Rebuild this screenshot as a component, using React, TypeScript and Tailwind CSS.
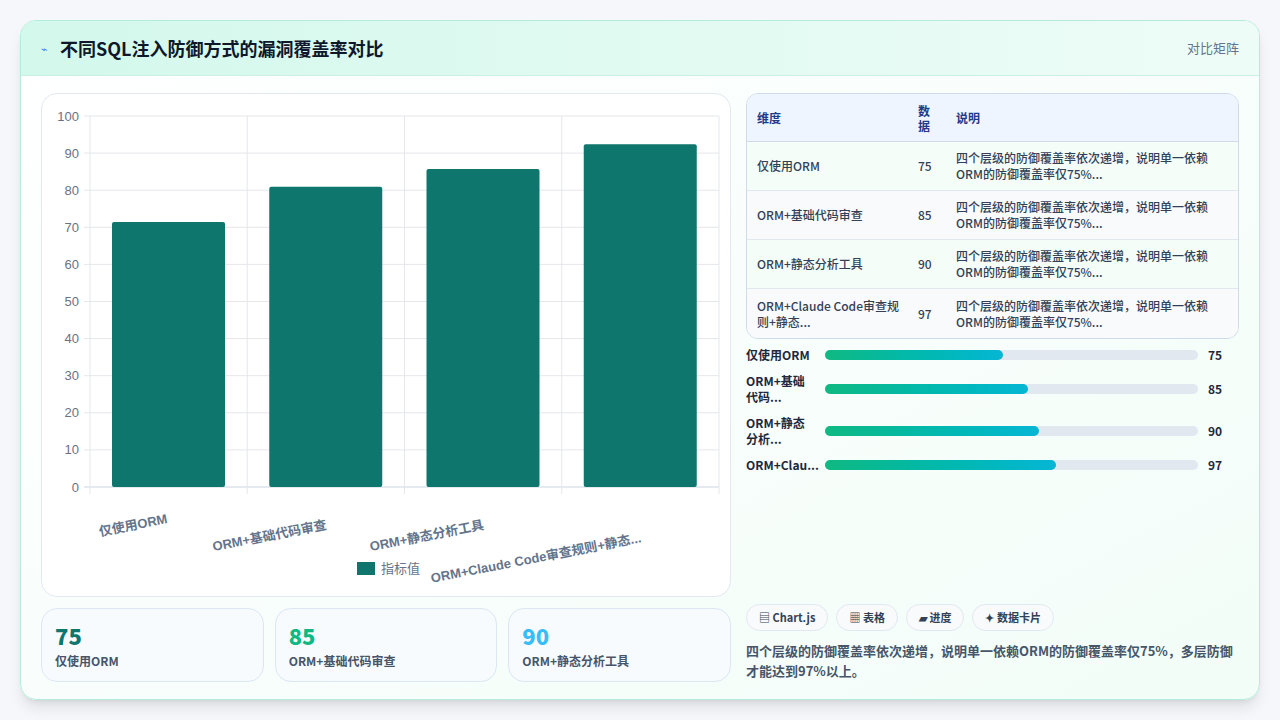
import React from 'react';

const items = [
  { name: '仅使用ORM', short: '仅使用ORM', v: 75, chart: 71.4, desc: '四个层级的防御覆盖率依次递增，说明单一依赖ORM的防御覆盖率仅75%...' },
  { name: 'ORM+基础代码审查', short: 'ORM+基础代码...', v: 85, chart: 80.9, desc: '' },
  { name: 'ORM+静态分析工具', short: 'ORM+静态分析...', v: 90, chart: 85.7, desc: '' },
  { name: 'ORM+Claude Code审查规则+静态...', short: 'ORM+Clau...', v: 97, chart: 92.4, desc: '' },
];

const font = { fontFamily: '"Noto Sans CJK SC", "Noto Sans", sans-serif' };

function BarChart() {
  // plot area in local coords (card starts at 40,93)
  const x0 = 48, x1 = 677, yb = 393, yt = 22;
  const h = yb - yt;
  const cw = (x1 - x0) / 4;
  const labels = ['仅使用ORM', 'ORM+基础代码审查', 'ORM+静态分析工具', 'ORM+Claude Code审查规则+静态...'];
  return (
    <svg width="689" height="503" className="block">
      {[0, 10, 20, 30, 40, 50, 60, 70, 80, 90, 100].map((t) => {
        const y = yb - (t / 100) * h;
        return (
          <g key={t}>
            <line x1={x0 - 6} x2={x1} y1={y} y2={y} stroke={t === 0 ? '#cbd5e1' : '#e5e7eb'} />
            <text x={x0 - 11} y={y + 4.5} textAnchor="end" fontSize="13" fill="#6b7280" fontFamily="Liberation Sans, Arial, sans-serif">{t}</text>
          </g>
        );
      })}
      {[0, 1, 2, 3, 4].map((i) => (
        <line key={i} x1={x0 + i * cw} x2={x0 + i * cw} y1={yt} y2={yb + 7} stroke="#e5e7eb" />
      ))}
      {items.map((it, i) => {
        const top = yb - (it.chart / 100) * h;
        return <rect key={i} x={x0 + i * cw + 22} y={top} width={113} height={yb - top} rx="2" fill="#0f766e" />;
      })}
      {labels.map((l, i) => {
        const x = x0 + i * cw + cw / 2 + (i === 3 ? 0 : 0);
        const y = i === 3 ? 448 : yb + (i === 0 ? 36 : 42);
        const ax = i === 0 ? x0 + 78 : i === 1 ? x0 + cw + 80 : i === 2 ? x0 + 2 * cw + 80 : x0 + 3 * cw + 80;
        return (
          <text key={i} x={ax} y={y} textAnchor="end" transform={`rotate(-11 ${ax} ${y})`} fontSize="13" fontWeight="bold" fill="#64748b" fontFamily="Liberation Sans, Arial, 'Noto Sans CJK SC', sans-serif">{l}</text>
        );
      })}
      <rect x="315" y="468" width="18" height="13" fill="#0f766e" />
      <text x="339" y="479" fontSize="13" fill="#64748b" fontFamily="'Noto Sans CJK SC', sans-serif">指标值</text>
    </svg>
  );
}

export default function App() {
  const desc = '四个层级的防御覆盖率依次递增，说明单一依赖ORM的防御覆盖率仅75%...';
  const fills = [178, 203, 214, 231];
  return (
    <div className="w-[1280px] h-[720px] bg-[#f5f7fa] p-5" style={font}>
      <div className="h-[680px] rounded-2xl border border-[#b5ebdc] bg-gradient-to-br from-white to-[#f2fdf8] shadow-lg overflow-hidden flex flex-col">
        <div className="h-[55px] flex items-center justify-between px-5 bg-gradient-to-r from-[#d3f8ec] to-[#eefcf7] border-b border-[#c9f0e3]">
          <div className="flex items-center gap-3">
            <span className="text-[11px] text-[#3b82f6]">⌁</span>
            <span className="text-[18px] font-bold text-[#0f172a]">不同SQL注入防御方式的漏洞覆盖率对比</span>
          </div>
          <span className="text-[13px] text-[#64748b]">对比矩阵</span>
        </div>
        <div className="flex-1 flex gap-[15px] px-5 pt-[17px]">
          <div className="w-[690px] flex flex-col gap-[11px]">
            <div className="h-[504px] rounded-2xl border border-[#e2e8f0] bg-white">
              <BarChart />
            </div>
            <div className="grid grid-cols-3 gap-[11px]">
              {[['75', 'text-[#0f766e]', '仅使用ORM'], ['85', 'text-[#10b981]', 'ORM+基础代码审查'], ['90', 'text-[#38bdf8]', 'ORM+静态分析工具']].map(([v, c, l]) => (
                <div key={v} className="h-[74px] rounded-2xl border border-[#dbe7f3] bg-[#f8fbfe] px-[13px] pt-[12px]">
                  <div className={`text-[22px] font-extrabold leading-[28px] ${c}`}>{v}</div>
                  <div className="text-[12px] font-semibold text-[#475569] mt-[3px]">{l}</div>
                </div>
              ))}
            </div>
          </div>
          <div className="flex-1 flex flex-col">
            <div className="rounded-xl border border-[#cfdbe8] overflow-hidden text-[12px]">
              <div className="h-[48px] flex items-center bg-[#eef5ff] border-b border-[#cfdbe8] font-semibold text-[#1e3a8a]">
                <div className="w-[171px] pl-[10px]">维度</div>
                <div className="w-[38px] leading-[15px]">数<br />据</div>
                <div className="flex-1">说明</div>
              </div>
              {items.map((it, i) => (
                <div key={i} className={`h-[49px] flex items-center text-[#334155] font-medium ${i < 3 ? 'border-b border-[#e2e8f0]' : ''} ${i % 2 === 0 ? 'bg-[#f4fdf8]' : 'bg-[#f8fafc]'}`}>
                  <div className="w-[171px] pl-[10px] pr-2 leading-[16px]">{i === 3 ? <>ORM+Claude Code审查规<br />则+静态...</> : it.name}</div>
                  <div className="w-[38px]">{it.v}</div>
                  <div className="flex-1 leading-[16px] pr-4">四个层级的防御覆盖率依次递增，说明单一依赖<br />ORM的防御覆盖率仅75%...</div>
                </div>
              ))}
            </div>
            <div className="flex flex-col mt-[6px] gap-[6px] text-[12px] font-bold text-[#1e293b]">
              {items.map((it, i) => (
                <div key={i} className={`flex items-center ${i === 1 || i === 2 ? 'h-[36px]' : 'h-[20px]'}`}>
                  <div className="w-[79px] leading-[16px]">{i === 1 ? <>ORM+基础<br />代码...</> : i === 2 ? <>ORM+静态<br />分析...</> : it.short}</div>
                  <div className="w-[373px] h-[10px] rounded-full bg-[#e2e8f0]">
                    <div className="h-full rounded-full bg-gradient-to-r from-[#10b981] to-[#06b6d4]" style={{ width: fills[i] }} />
                  </div>
                  <div className="ml-[10px]">{it.v}</div>
                </div>
              ))}
            </div>
            <div className="mt-auto pb-[18px]">
              <div className="flex gap-2 text-[11px] font-semibold text-[#334155]">
                {['▤ Chart.js', '▦ 表格', '▰ 进度', '✦ 数据卡片'].map((t) => (
                  <span key={t} className="h-[27px] px-3 flex items-center rounded-full border border-[#e2e8f0] bg-[#f8fafc]">{t}</span>
                ))}
              </div>
              <p className="mt-[10px] text-[13px] leading-[20px] font-semibold text-[#475569]">四个层级的防御覆盖率依次递增，说明单一依赖ORM的防御覆盖率仅75%，多层防御才能达到97%以上。</p>
            </div>
          </div>
        </div>
      </div>
    </div>
  );
}
